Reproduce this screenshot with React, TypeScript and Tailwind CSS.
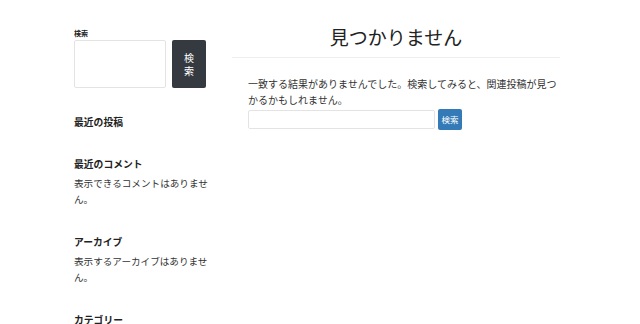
const font = { fontFamily: '"Noto Sans CJK JP", "Noto Sans", sans-serif' };

function Widget({ title, body }: { title: string; body?: string }) {
  return (
    <section className={body ? "mb-[27px]" : "mb-[26px]"}>
      <h2 className="text-[9.8px] leading-[16px] font-bold text-[#222] mb-[3px]">{title}</h2>
      {body && <p className="text-[9.6px] leading-[16px] text-[#333] break-all">{body}</p>}
    </section>
  );
}

export default function App() {
  return (
    <div className="w-[640px] h-[324px] overflow-hidden bg-white flex pl-[74px]" style={font}>
      {/* Sidebar */}
      <aside className="w-[136px] shrink-0 pt-[28px]">
        <form className="mb-[26px]" onSubmit={(e) => e.preventDefault()}>
          <label className="block text-[7px] leading-[10px] font-bold text-[#222] mb-[2px]">検索</label>
          <div className="flex items-stretch gap-[6px]">
            <input className="w-[92px] h-[48px] border border-[#e3e3e3] rounded-[2px] bg-white" />
            <button className="w-[34px] h-[48px] bg-[#343a40] rounded-[2px] text-white text-[10px] leading-[13px] px-[10px] break-all">
              検索
            </button>
          </div>
        </form>
        <Widget title="最近の投稿" />
        <Widget title="最近のコメント" body="表示できるコメントはありません。" />
        <Widget title="アーカイブ" body="表示するアーカイブはありません。" />
        <Widget title="カテゴリー" />
      </aside>

      {/* Main */}
      <main className="w-[328px] ml-[22px] pt-[25px]">
        <h1 className="text-center text-[19px] leading-[24px] font-normal text-[#222] pb-[8px] border-b border-[#eeeeee]">
          見つかりません
        </h1>
        <div className="pl-[16px] pt-[18px]">
          <p className="w-[310px] text-[10px] leading-[16px] text-[#333] break-all">
            一致する結果がありませんでした。検索してみると、関連投稿が見つかるかもしれません。
          </p>
          <form className="flex items-center gap-[3px] mt-[1px]" onSubmit={(e) => e.preventDefault()}>
            <input className="w-[187px] h-[19px] border border-[#e3e3e3] rounded-[2px] bg-white" />
            <button className="w-[24px] h-[21px] bg-[#337ab7] rounded-[2px] text-white text-[8.5px] leading-[21px] text-center">
              検索
            </button>
          </form>
        </div>
      </main>
    </div>
  );
}
